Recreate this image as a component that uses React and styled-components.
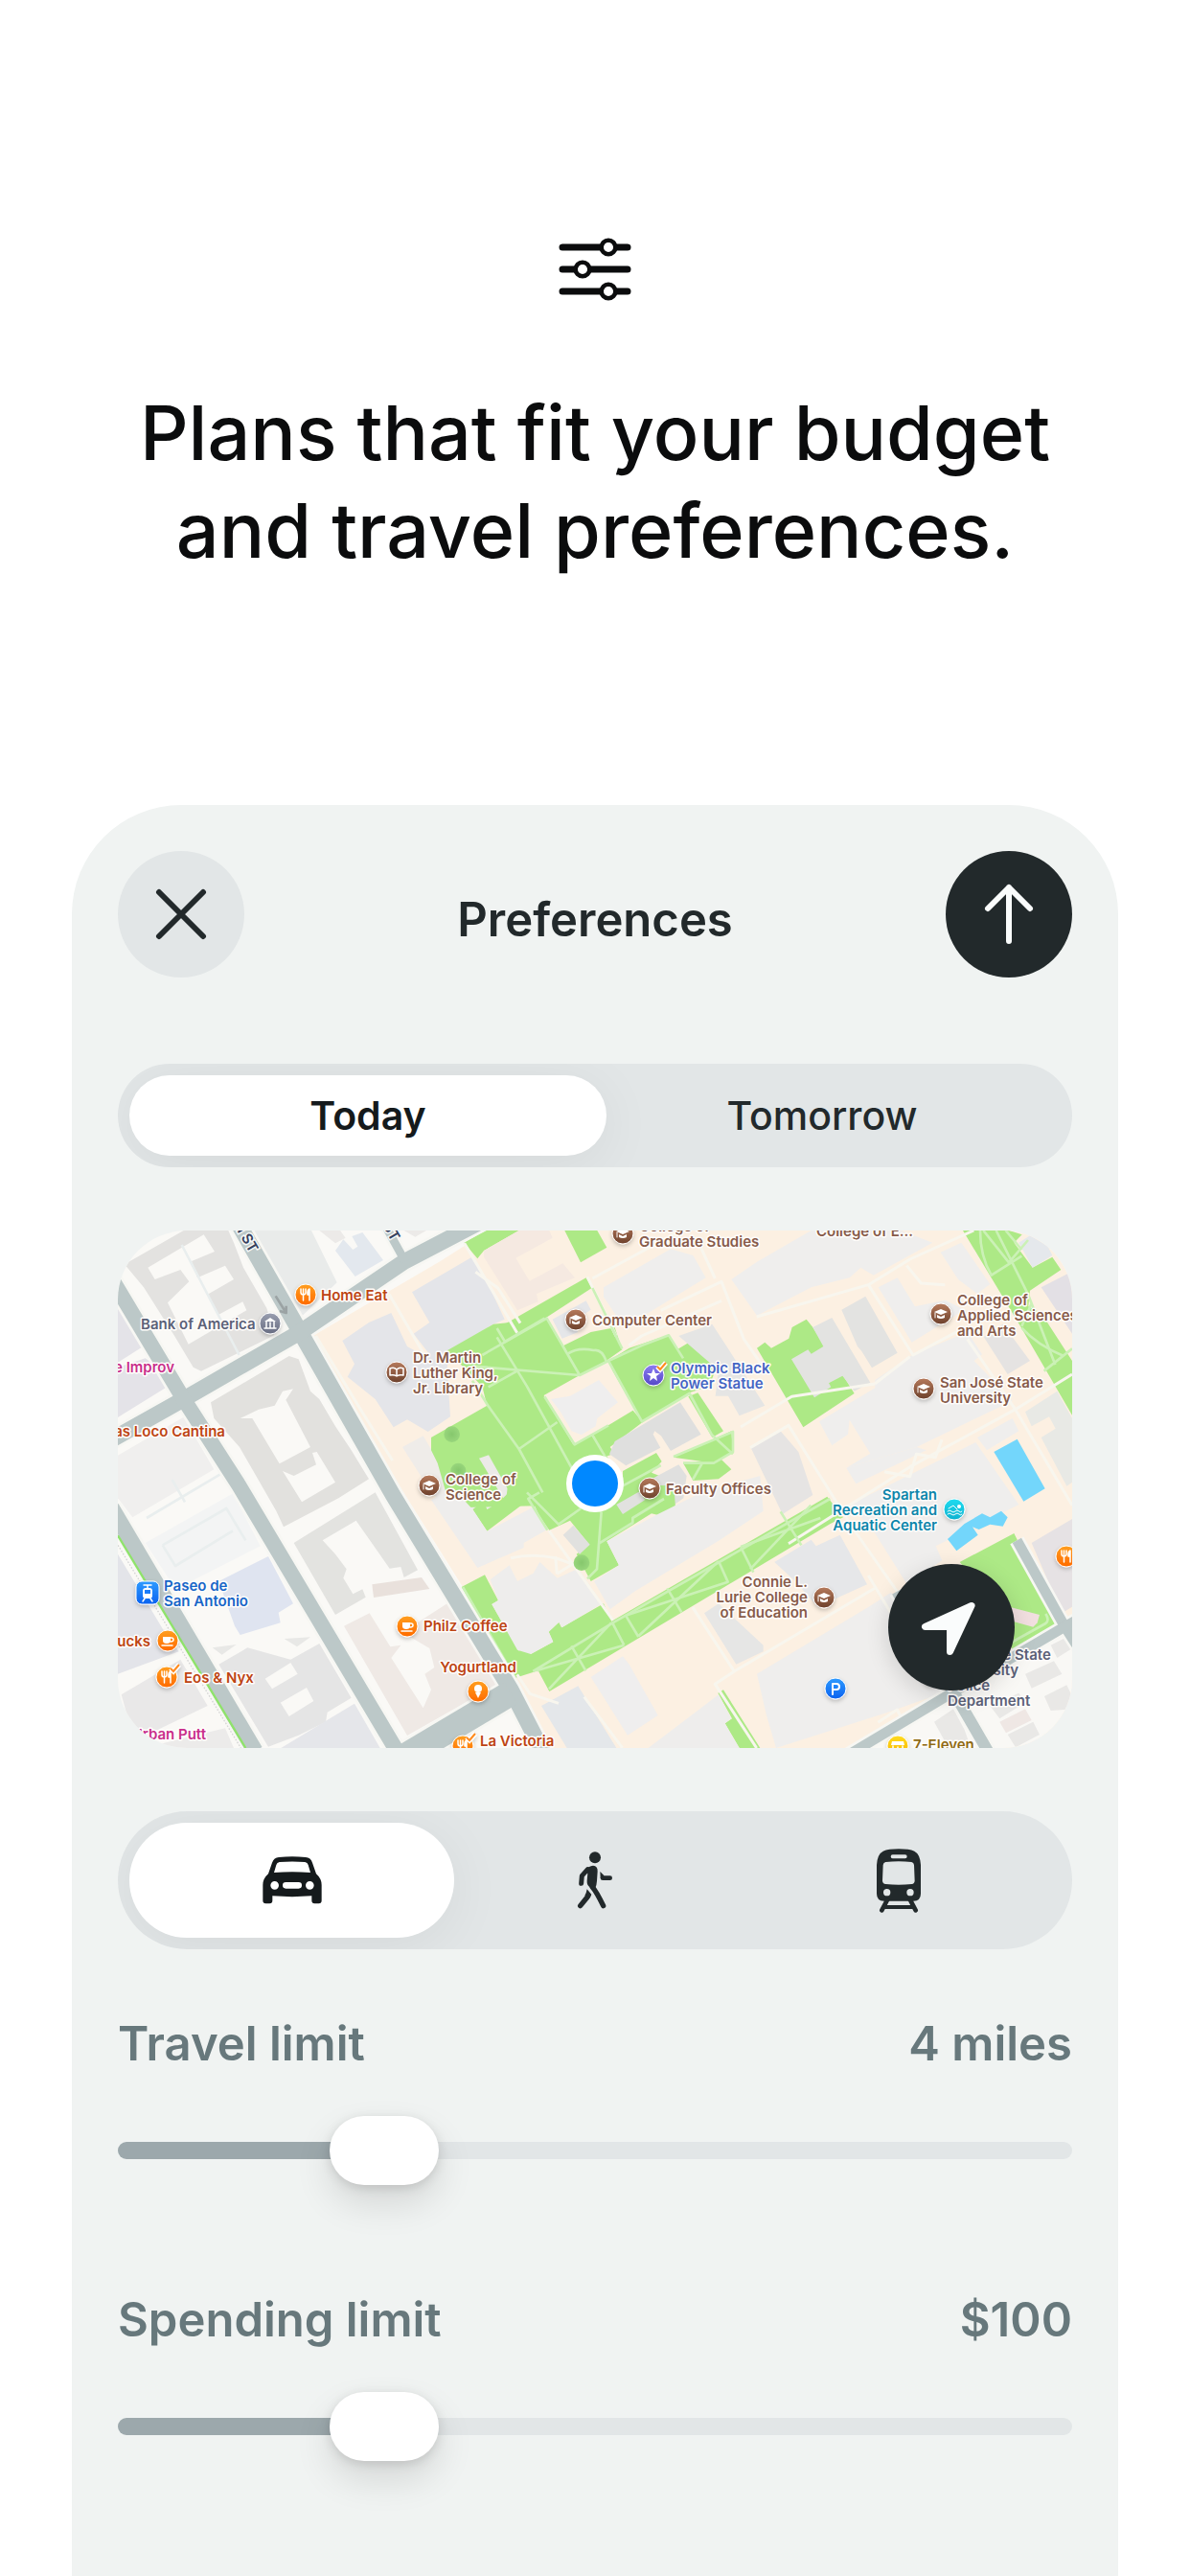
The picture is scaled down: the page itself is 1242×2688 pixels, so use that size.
import React, { useState } from "react"
import styled, { createGlobalStyle } from "styled-components"

const colors = {
  ink: "#0b0c0d",
  dark: "#22292b",
  panel: "#f0f3f2",
  control: "#e2e6e7",
  muted: "#67787c",
  fill: "#9ca8ac",
}

const labelColors = {
  food: "#bd4413",
  campus: "#875b4a",
  office: "#5b6178",
  fun: "#c92f8b",
  transit: "#1766c8",
  sight: "#4466c4",
  sport: "#0e86ab",
  store: "#8f6a14",
}

const pinColors = {
  food: ["#ff9f1f", "#ff6a00"],
  campus: ["#b67a5c", "#6d412c"],
  office: ["#9a9fb0", "#686d82"],
  transit: ["#2f9bff", "#0a62f0"],
  sight: ["#8b7df2", "#5547c8"],
  sport: ["#1fdcf0", "#0fb2d0"],
  store: ["#ffdb1f", "#f7b500"],
}

const LINE = 16

const labels = [
  { kind: "food", x: 212, y: 73, lines: ["Home Eat"] },
  { kind: "office", x: 24, y: 103, lines: ["Bank of America"] },
  { kind: "fun", x: 59, y: 148, anchor: "end", lines: ["e Improv"] },
  { kind: "food", x: 112, y: 215, anchor: "end", lines: ["as Loco Cantina"] },
  { kind: "campus", x: 308, y: 138, lines: ["Dr. Martin", "Luther King,", "Jr. Library"] },
  { kind: "campus", x: 342, y: 265, lines: ["College of", "Science"] },
  { kind: "campus", x: 495, y: 99, lines: ["Computer Center"] },
  { kind: "campus", x: 544, y: 1, lines: ["College of", "Graduate Studies"] },
  { kind: "campus", x: 729, y: 6, lines: ["College of E..."] },
  { kind: "sight", x: 577, y: 149, lines: ["Olympic Black", "Power Statue"] },
  { kind: "campus", x: 876, y: 78, lines: ["College of", "Applied Sciences", "and Arts"] },
  { kind: "campus", x: 858, y: 164, lines: ["San José State", "University"] },
  { kind: "campus", x: 572, y: 275, lines: ["Faculty Offices"] },
  { kind: "sport", x: 855, y: 281, anchor: "end", lines: ["Spartan", "Recreation and", "Aquatic Center"] },
  { kind: "campus", x: 720, y: 372, anchor: "end", lines: ["Connie L.", "Lurie College", "of Education"] },
  { kind: "transit", x: 48, y: 376, lines: ["Paseo de", "San Antonio"] },
  { kind: "food", x: 34, y: 434, anchor: "end", lines: ["ucks"] },
  { kind: "food", x: 69, y: 472, lines: ["Eos & Nyx"] },
  { kind: "food", x: 319, y: 418, lines: ["Philz Coffee"] },
  { kind: "fun", x: 92, y: 531, anchor: "end", lines: ["Urban Putt"] },
  { kind: "food", x: 376, y: 461, anchor: "middle", lines: ["Yogurtland"] },
  { kind: "food", x: 378, y: 538, lines: ["La Victoria"] },
  { kind: "store", x: 830, y: 542, lines: ["7-Eleven"] },
  { kind: "office", x: 866, y: 448, lines: ["San José State", "University", "Police", "Department"] },
]

const pins = [
  { kind: "food", glyph: "fork", x: 196, y: 67 },
  { kind: "office", glyph: "bank", x: 159, y: 97 },
  { kind: "campus", glyph: "book", x: 291, y: 148 },
  { kind: "campus", glyph: "cap", x: 325, y: 266 },
  { kind: "campus", glyph: "cap", x: 478, y: 93 },
  { kind: "campus", glyph: "cap", x: 527, y: 3 },
  { kind: "sight", glyph: "star", x: 559, y: 151, checked: true },
  { kind: "campus", glyph: "cap", x: 859, y: 87 },
  { kind: "campus", glyph: "cap", x: 841, y: 165 },
  { kind: "campus", glyph: "cap", x: 555, y: 269 },
  { kind: "sport", glyph: "swim", x: 873, y: 291 },
  { kind: "campus", glyph: "cap", x: 737, y: 383 },
  { kind: "transit", glyph: "parking", x: 749, y: 478 },
  { kind: "transit", glyph: "tram", x: 31, y: 378, square: true },
  { kind: "food", glyph: "cup", x: 52, y: 428 },
  { kind: "food", glyph: "fork", x: 51, y: 466, checked: true },
  { kind: "food", glyph: "cup", x: 302, y: 413 },
  { kind: "food", glyph: "cone", x: 376, y: 481 },
  { kind: "food", glyph: "fork", x: 360, y: 538, checked: true },
  { kind: "store", glyph: "shop", x: 814, y: 538 },
  { kind: "food", glyph: "fork", x: 990, y: 340 },
  { kind: "office", glyph: "bank", x: 850, y: 464 },
]

// Ground shapes are drawn at three units per pixel, one sheet for each sixth of the map
const sheets = [
  {
    at: "-9 -12",
    shapes: [
      ["#e3e2e0", "30,118 215,12 355,12 372,50 402,128 475,255 500,340 270,452 245,440 185,340 90,190"],
      ["#faf9f6", "103,128 278,25 312,78 240,108 258,160 345,122 372,165 290,212 325,275 400,235 412,262 230,368 165,238 232,172 205,135 125,165"],
      ["#e9ebea", "415,12 615,12 695,175 575,290 560,262"],
      ["#e3e8ee", "690,75 715,40 745,72 760,62 742,30 775,18 840,105 752,156"],
      ["#eceae8", "640,12 705,12 722,35 690,52"],
      ["#eceae8", "905,12 975,12 940,32"],
      ["#e4e3e8", "9,238 88,375 9,425"],
      ["#e4e3e8", "9,440 95,412 150,450 158,505 9,597"],
      ["#f0efee", "9,716 215,596 310,760 55,910 9,850"],
      ["#e2e1de", "300,550 545,405 575,415 612,515 640,540 690,625 740,700 795,790 700,850 528,940 505,890 390,690 310,600"],
      ["#faf9f6", "392,600 450,572 500,560 525,515 558,508 535,542 612,690 515,742 430,600"],
      ["#faf9f6", "525,765 560,780 630,745 618,708 632,705 690,800 585,862"],
    ],
  },
  {
    at: "-9 798",
    shapes: [
      ["#f3f4f4", "95,180 370,25 455,190 190,325"],
      ["#dfe4f0", "325,300 480,222 558,370 512,398 518,430 392,468 375,440"],
      ["#e3e3e0", "560,180 815,22 948,265 905,288 895,255 860,260 825,210 755,110 650,172 690,215 725,262 715,290 745,340 775,325 785,350 690,405"],
      ["#e9e1dc", "805,310 960,288 985,324 810,351"],
      ["#efe9e5", "717,440 797,400 862,505 895,500 865,540 965,697 990,640 970,590 1000,570 985,510 900,460 1040,370 1240,610 1195,625 915,783"],
      ["#e5e5e5", "325,560 415,508 550,545 640,495 740,665 665,710 660,740 575,782 480,818"],
      ["#faf9f6", "470,605 550,555 572,590 492,637"],
      ["#faf9f6", "518,680 600,633 622,675 545,723"],
      ["#e8e8e6", "305,508 380,498 335,530"],
      ["#e8e8e6", "530,480 612,475 570,505"],
      ["#e5e6ea", "520,822 750,683 830,822"],
      ["#e3e4e9", "9,215 150,450 200,520 9,590"],
      ["#e9e8e8", "20,655 205,545 290,690 60,800"],
      ["#ecebea", "90,822 345,760 372,822"],
    ],
  },
]

const campusSheets = [
  {
    at: "-9 -12",
    shapes: [
      ["#e4e5e9", "930,205 1115,97 1155,150 1220,290 1185,305 1050,385 1040,440 1050,595 980,642 915,604 872,628 815,540 728,470 750,430 712,357 795,300 865,270 915,375 960,400 985,400 935,335 985,300"],
      ["#efece9", "900,690 965,655 1050,800 1180,800 1225,860 1090,960 970,800"],
    ],
  },
  {
    at: "981 -12",
    shapes: [
      ["#ade986", "103,50 170,12 275,12 165,75 145,100"],
      ["#ade986", "418,12 520,12 550,65 468,112"],
      ["#ade986", "50,388 195,305 362,288 465,465 353,528 445,682 500,652 570,745 450,840 480,870 60,880 20,740 0,700 0,660 175,560 160,500"],
      ["#ade986", "208,318 485,160 503,192 355,288 230,360"],
      ["#ade986", "415,372 500,330 575,316 598,385 548,420 465,465"],
      ["#ade986", "555,420 620,380 745,338 770,385 820,355 850,370 890,450 870,500 808,520 660,608 570,455"],
      ["#ade986", "505,652 632,575 662,612 560,690 575,710 545,720"],
      ["#ade986", "805,532 835,520 915,640 880,660"],
      ["#ade986", "758,722 940,640 945,705 885,740"],
      ["#ade986", "790,742 905,725 940,760 900,790 820,795"],
      ["#ade986", "600,765 705,708 722,735 690,770 740,790 600,880"],
      ["#f5e9e1", "165,75 275,12 370,12 380,35 265,98 308,170 412,115 450,160 330,210 335,235 270,262 165,95"],
      ["#e5e6e9", "380,290 485,232 500,260 440,300 460,330 410,350"],
      ["#efeeed", "540,190 750,70 820,90 860,160 680,270 600,310 540,220"],
      ["#fcf0e2", "353,530 540,430 570,455 630,570 445,682"],
      ["#efeeee", "375,540 435,530 525,480 585,550 520,600 515,625 470,652 440,640 405,580"],
      ["#dfdfde", "558,712 575,672 780,550 845,650 750,702 720,655 700,640 695,650 718,692 610,748"],
      ["#e5e5e4", "775,342 880,305 1045,560 965,592 930,530 890,530 900,450"],
      ["#e0e0df", "690,790 775,745 800,780 790,850 720,900"],
      ["#eceae8", "150,725 180,715 245,830 225,850"],
    ],
  },
  {
    at: "1971 -12",
    shapes: [
      ["#ade986", "30,380 55,362 75,380 130,350 140,315 185,290 205,315 335,522 175,628"],
      ["#ade986", "675,12 820,12 860,25 835,50 893,128 955,95 982,135 885,200 880,250 920,270 1017,420 1017,590 860,320"],
      ["#e3e3e1", "138,415 190,385 200,398 238,375 205,315 265,285 385,488 335,515 298,467 255,490 262,502 210,535"],
      ["#efeeed", "-50,165 30,110 200,12 480,12 580,50 395,152 355,128 320,160 200,190 30,278"],
      ["#e3e3e1", "295,260 370,218 470,395 390,442 358,390 345,375"],
      ["#efeeed", "410,190 470,160 525,250 620,230 680,260 515,362"],
      ["#efeeed", "605,80 670,50 760,180 720,210 660,165"],
      ["#e5e8ec", "850,50 885,28 940,60 955,90 893,128"],
      ["#e3e0e5", "920,190 1017,140 1017,335"],
      ["#e5e3e2", "740,345 800,305 885,420 815,462"],
      ["#efeeed", "225,610 400,505 400,480 520,400 690,330 735,400 710,420 830,545 530,690 310,755 385,710 320,605 315,650 265,685"],
      ["#efeeed", "310,755 340,805 560,700 530,690"],
      ["#e6e4e3", "10,690 100,635 160,705 205,840 110,900"],
      ["#efeeed", "720,660 830,600 850,640 750,700"],
      ["#e8e9e5", "870,580 970,515 1017,600 1017,800 1000,812 920,660 965,632 945,595 890,625"],
      ["#efeeed", "320,870 715,675 850,870 590,1000 610,1045 500,1120 400,960"],
      ["#73d6fb", "772,705 845,665 932,820 865,860"],
    ],
  },
  {
    at: "981 798",
    shapes: [
      ["#ade986", "130,75 165,50 175,75 235,40 240,0 760,0 765,70 720,95 690,88 550,175 588,250 500,300 455,215 495,185 435,110 370,140 305,45 175,143"],
      ["#ade986", "95,318 168,280 210,360 190,372 275,518 295,500 312,528 382,490 368,458 400,428 408,445 540,370 565,425 1240,35 1290,100 1250,120 990,275 370,645 335,580 262,603"],
      ["#ade986", "898,650 915,640 1030,822 965,822 920,745 942,730"],
      ["#eeedec", "0,45 70,10 130,75 175,143 325,65 360,140 290,180 290,195 145,258"],
      ["#eeedec", "185,295 245,250 270,300 320,275 340,240 395,290 460,260 535,370 410,445 400,428 368,458 382,490 312,528 270,515 190,372 210,360"],
      ["#eeedec", "550,175 710,90 850,20 1030,-30 1040,80 905,170 640,330 560,388 510,300 588,250"],
      ["#e1e1df", "413,155 445,125 497,185 465,215"],
      ["#e1e1df", "580,60 650,20 670,45 600,90"],
      ["#e4e7ea", "345,690 460,628 580,822 425,822"],
      ["#efeeee", "500,600 600,535 620,560 710,720 615,782"],
      ["#e6e6e5", "855,400 900,370 1040,500 1040,520 955,560"],
      ["#eeedec", "680,822 900,655 940,730 920,745 965,822"],
    ],
  },
  {
    at: "1971 798",
    shapes: [
      ["#73d6fb", "627,168 680,120 735,88 760,100 795,80 815,100 800,128 760,122 725,138 705,130 722,155 655,205"],
      ["#ade986", "665,240 835,150 978,435 830,515 750,340"],
      ["#e6e7e9", "85,240 200,170 215,190 290,155 375,310 220,380 150,300"],
      ["#efeeed", "30,590 380,380 450,335 640,640 440,710 90,822 60,720"],
      ["#f2dfe0", "780,370 915,405 908,430 895,443 830,425"],
      ["#e6e2e4", "890,180 1017,105 1017,380 985,400"],
      ["#f9f8f5", "1017,475 995,455 640,665 350,822 1017,822"],
      ["#e9e8e6", "585,740 645,700 680,765 700,822 630,822"],
      ["#e9e8e6", "760,690 850,650 870,680 790,730"],
      ["#efe7e4", "790,740 870,700 890,735 810,775"],
      ["#e9e8e6", "815,780 895,740 915,780 840,820"],
      ["#e9e8e6", "870,590 960,550 985,590 890,635"],
      ["#e9e8e6", "930,660 1000,625 1017,660 1017,700 950,705"],
      ["#e9e8e6", "950,500 1000,475 1017,510 970,540"],
    ],
  },
]

const footpaths = [
  "M1187,334 L1281,488 L1430,760 L1490,860",
  "M1187,306 L1212,348 L1336,275",
  "M1141,390 L1343,275 L1446,453 L1115,425 M1160,490 L1250,440",
  "M1446,453 L1536,408 L1640,360 L1725,328 L1770,400",
  "M1110,470 L1160,550 L1256,684 L1330,820",
  "M1256,684 L1376,600 M1336,520 L1430,670 L1536,610",
  "M1410,385 Q1440,365 1490,375 Q1515,370 1529,408",
  "M1486,180 L1579,370",
  "M1536,408 L1641,598 L1790,510 L1860,640 L1926,700",
  "M1740,708 L1926,630 L1926,693 L1866,728 L1770,728 M1830,728 L1800,780",
  "M1486,640 L1530,715 M1580,800 L1700,735",
  "M1281,820 L1380,920 L1450,870 M1345,938 L1285,840 L1320,820",
  "M1514,880 L1500,1060 L1470,1090 M1506,980 L1612,915 L1612,900 L1710,840",
  "M1300,1380 L1555,1225 L2230,840 M1310,1378 L1585,1298 M1350,1435 L1545,1228 M1420,1300 L1465,1378",
  "M1547,1225 L1585,1298 M1720,1120 L1765,1195 M1590,1205 L1630,1272 M1590,1205 L1910,1100 L1881,1035",
  "M1881,1035 L1630,1270 M1950,990 L1990,1070 M1950,990 L2200,900 M1980,1060 L2170,860 M2075,880 L2140,985",
  "M1080,1116 L1243,1400",
  "M2700,0 Q2700,80 2735,140 L2830,80 M2750,0 L2850,200 L2935,420 M2710,0 L2790,100 L2850,30",
  "M2830,305 Q2880,360 2960,392 M2900,440 L2988,370 M2780,0 L2830,60 M2860,230 L2830,300",
  "M2770,1305 L2905,1230 Q2918,1220 2905,1200",
]

const walkways = [
  "M1085,40 L1250,320 M1120,130 L1190,180 L1260,290",
  "M1486,150 L1780,-10 M1470,145 L1560,330",
  "M1700,250 L1890,160 L1960,340 L2030,440 M1870,150 L1810,20",
  "M1600,360 L1640,330 L1890,220",
  "M2000,270 L2350,170 L2480,90 L2680,0",
  "M2350,170 L2490,390 L2640,310 M2470,110 L2515,165 L2590,170",
  "M2370,480 L2480,395 M1950,615 L2110,520 L2370,480",
  "M1980,680 L2100,610 L2300,930 L2440,1130",
  "M2100,980 L2480,740 L2810,560 L2988,450",
  "M2400,755 L2480,770 L2500,700 L2560,710 L2580,655",
  "M2660,340 L2810,560 L2988,860",
  "M1550,1220 L1350,940 M1230,1025 Q1300,1010 1370,1025 L1440,1050 M1375,1075 L1370,1020 M1375,1075 L1430,1040",
  "M1800,1180 L1930,1380 L2370,1120 M1930,1380 L1870,1420 L2000,1620",
  "M1380,1480 L1290,1450 L1250,1390 M1460,1460 L1580,1620",
  "M2350,1080 L2440,1230 M2380,1540 L2440,1500 L2460,1540",
  "M620,330 L760,560 L860,720 M850,200 L960,390",
]

const streets = [
  [50, "M378,-20 L571,318 L861,828 L1231,1438 L1335,1640"],
  [50, "M-20,655 L206,528 L571,318 L896,98 L1160,-40"],
  [48, "M-20,150 L206,528 L379,798 L880,1640"],
  [80, "M1231,1448 L850,1675"],
  [50, "M-20,868 L430,1630"],
  [26, "M835,-20 L900,98"],
  [32, "M2815,970 L2965,1240 L3010,1310"],
  [32, "M3010,1215 L2965,1240 L2611,1448 L2290,1640"],
  [36, "M2440,1130 L2620,1450 L2730,1640"],
]

const glyphs = {
  fork: (
    <>
      <path d="M-5 -6v3.5a2.5 2.5 0 0 0 5 0V-6M-2.500 -6V6" />
      <path d="M4 6V-6q-2.500 1-2 6h2" fill="#fff" />
    </>
  ),
  bank: (
    <>
      <path d="M-6 -2L0 -6L6 -2Z" fill="#fff" stroke="none" />
      <path d="M-4 -2V4M4 -2V4M-6 5H6M0 -1V4" />
    </>
  ),
  book: <path d="M0 -3Q-3 -6-7 -4V3Q-3 2 0 4Q3 2 7 3V-4Q3 -6 0 -3V4" />,
  cap: (
    <>
      <path d="M-7 -2L0 -5L7 -2L0 1Z" fill="#fff" stroke="none" />
      <path d="M-4 1V4Q0 6 4 4V1L0 3Z" fill="#fff" stroke="none" />
      <path d="M-6 -1V4" strokeWidth="1" />
    </>
  ),
  star: <path d="M0 -7L2 -2L7 -2L3 1L4 6L0 3L-4 6L-3 1L-7 -2L-2 -2Z" fill="#fff" stroke="none" />,
  swim: (
    <>
      <circle cx="5" cy="-3" r="2" fill="#fff" stroke="none" />
      <path d="M-6 -1L-1 -4L3 0M-7 2q2-2 4 0t4 0t4 0t3 0M-7 5q2-2 4 0t4 0t4 0t3 0" strokeWidth="1" />
    </>
  ),
  parking: <path d="M-3 6V-5H1Q4 -5 4 -2T1 1H-3" strokeWidth="2" />,
  tram: (
    <>
      <rect x="-5" y="-5" width="10" height="11" rx="3" fill="#fff" stroke="none" />
      <rect x="-3" y="-3" width="6" height="4" fill="#1c7dfa" stroke="none" />
      <path d="M-4 -8H4M0 -8V-5M-3 6L-5 9M3 6L5 9" />
    </>
  ),
  cup: (
    <>
      <path d="M-5 -4H3V0Q3 3-1 3Q-5 3-5 0Z" fill="#fff" stroke="none" />
      <path d="M3 -3H4Q6 -3 6-1T3 1M-6 5H5" />
    </>
  ),
  cone: (
    <>
      <circle cx="0" cy="-3" r="4" fill="#fff" stroke="none" />
      <path d="M-3 1H3L0 7Z" fill="#fff" stroke="none" />
    </>
  ),
  shop: (
    <>
      <path d="M-6 -5H6L7 -1H-7Z" fill="#fff" stroke="none" />
      <path d="M-5 0V5H5V0M0 1V5" />
    </>
  ),
}

const Sheet = ({ at, shapes }) => (
  <g transform={`translate(${at})`}>
    {shapes.map(([fill, points]) => (
      <polygon key={points} fill={fill} points={points} />
    ))}
  </g>
)

const Pin = ({ kind, glyph, x, y, checked, square }) => (
  <g transform={`translate(${x} ${y})`} filter="url(#pin-shadow)">
    {square ? (
      <rect x="-12" y="-12" width="24" height="24" rx="6" fill={`url(#pin-${kind})`} stroke="#fff" />
    ) : (
      <circle r="11" fill={`url(#pin-${kind})`} stroke="#fff" />
    )}
    <g fill="none" stroke="#fff" strokeWidth="1.5" strokeLinecap="round" strokeLinejoin="round">
      {glyphs[glyph]}
    </g>
    {checked && (
      <>
        <path d="M4 -9L7 -6L13 -13" fill="none" stroke="#fff" strokeWidth="5" />
        <path d="M4 -9L7 -6L13 -13" fill="none" stroke="#ff8a1f" strokeWidth="2" />
      </>
    )}
  </g>
)

const CityMap = () => (
  <MapArt viewBox="0 0 996 540" preserveAspectRatio="xMidYMid slice" role="img" aria-label="Map">
    <defs>
      {Object.entries(pinColors).map(([kind, [top, bottom]]) => (
        <linearGradient key={kind} id={`pin-${kind}`} x1="0" y1="0" x2="0" y2="1">
          <stop offset="0" stopColor={top} />
          <stop offset="1" stopColor={bottom} />
        </linearGradient>
      ))}
      <radialGradient id="tree">
        <stop offset="0" stopColor="#86c76d" />
        <stop offset="1" stopColor="#98d67c" />
      </radialGradient>
      <filter id="pin-shadow" x="-50%" y="-50%" width="200%" height="200%">
        <feDropShadow dx="0" dy="2" stdDeviation="2" floodOpacity="0.22" />
      </filter>
    </defs>

    <g transform="scale(0.33333)">
      <rect width="2988" height="1620" fill="#faf9f6" />
      {sheets.map((sheet) => (
        <Sheet key={sheet.at} {...sheet} />
      ))}
      <polygon fill="#fcf0e2" points="594,340 1011,95 1180,-12 2988,-12 2988,1620 1340,1620 1080,1116" />
      {campusSheets.map((sheet) => (
        <Sheet key={sheet.at} {...sheet} />
      ))}
      <g fill="none" strokeLinejoin="round">
        {walkways.map((d) => (
          <path key={d} d={d} stroke="#f8f6ee" strokeWidth="9" />
        ))}
        {footpaths.map((d) => (
          <path key={d} d={d} stroke="#cbf1b6" strokeWidth="8" />
        ))}
        <path d="M200,45 L380,390 M90,900 L360,740 M170,780 L210,850 M140,985 L340,870 L400,970 M140,985 L180,1050 L360,940" stroke="#e9eeee" strokeWidth="8" />
        {streets.map(([width, d]) => (
          <path key={d} d={d} stroke="#f7f7f3" strokeWidth={width + 16} />
        ))}
        {streets.map(([width, d]) => (
          <path key={d} d={d} stroke="#bcc8c8" strokeWidth={width} />
        ))}
        <path d="M0,955 L400,1620" stroke="#8fe36a" strokeWidth="7" />
        <path d="M-10,968 L385,1620" stroke="#d5d5d5" strokeWidth="4" strokeDasharray="5 5" />
        <path d="M494,205 L525,255 M507,252 L527,258 L527,236" stroke="#9ba3a4" strokeWidth="8" />
      </g>
      <circle cx="1046" cy="638" r="25" fill="url(#tree)" />
      <circle cx="1066" cy="752" r="24" fill="url(#tree)" />
      <circle cx="1452" cy="1040" r="25" fill="url(#tree)" />
    </g>

    <StreetName transform="translate(138 24) rotate(60)">4TH ST</StreetName>
    <StreetName transform="translate(286 12) rotate(60)">5TH ST</StreetName>

    {pins.map((pin) => (
      <Pin key={`${pin.x}-${pin.y}`} {...pin} />
    ))}
    {labels.map(({ kind, x, y, anchor, lines }) => (
      <PlaceName key={`${x}-${y}`} $kind={kind} textAnchor={anchor}>
        {lines.map((line, i) => (
          <tspan key={line} x={x} y={y + i * LINE}>
            {line}
          </tspan>
        ))}
      </PlaceName>
    ))}
    <circle cx="498" cy="264" r="30" fill="#fff" />
    <circle cx="498" cy="264" r="24" fill="#0088ff" />
  </MapArt>
)

const SlidersIcon = () => (
  <svg width="78" height="66" viewBox="0 0 78 66" fill="none" stroke={colors.ink} aria-hidden="true">
    <path d="M5 10H73M5 33H73M5 56H73" strokeWidth="7" strokeLinecap="round" />
    <g fill="#fff" strokeWidth="4.500">
      <circle cx="53" cy="10" r="7.300" />
      <circle cx="26" cy="33" r="7.300" />
      <circle cx="53" cy="56" r="7.300" />
    </g>
  </svg>
)

const CloseIcon = () => (
  <svg width="54" height="54" viewBox="0 0 54 54" stroke="currentColor" strokeWidth="6" strokeLinecap="round">
    <path d="M4 4L50 50M50 4L4 50" />
  </svg>
)

const ArrowUpIcon = () => (
  <svg width="54" height="66" viewBox="0 0 54 66" fill="none" stroke="currentColor" strokeWidth="6" strokeLinecap="round" strokeLinejoin="round">
    <path d="M27 61V5M5 27L27 5L49 27" />
  </svg>
)

const LocationIcon = () => (
  <svg width="132" height="132" viewBox="0 0 132 132" fill="currentColor" stroke="currentColor" strokeWidth="7" strokeLinejoin="round">
    <path d="M87 43.500L38.500 65.500H64.500V91.500Z" />
  </svg>
)

const CarIcon = () => (
  <svg width="62" height="50" viewBox="39 110 186 150" fill="currentColor" fillRule="evenodd">
    <path d="M40 200Q40 180 57 165L69 130Q75 114 90 113Q132 109 174 113Q190 114 195 130L207 165Q224 180 224 200V249Q224 258 215 258H202Q193 258 193 249V234Q132 239 70 234V249Q70 258 61 258H49Q40 258 40 249ZM75 161Q132 157 189 161L182 137Q180 129 172 128Q132 125 92 128Q84 129 82 137ZM64 201a13 13 0 1 0 26 0a13 13 0 1 0 -26 0ZM174 201a13 13 0 1 0 26 0a13 13 0 1 0 -26 0ZM112 191a10 10 0 0 0 0 20H152a10 10 0 0 0 0 -20Z" />
  </svg>
)

const WalkIcon = () => (
  <svg width="38" height="60" viewBox="126 94 114 180" fill="currentColor" stroke="currentColor" strokeLinecap="round" strokeLinejoin="round">
    <circle cx="183" cy="113" r="18" stroke="none" />
    <path d="M148 156Q164 138 177 138Q192 139 191 156L189 186Q188 200 184 208L168 206Q157 200 158 186L160 162Z" stroke="none" />
    <path d="M140 194L142 170L160 150" fill="none" strokeWidth="15" />
    <path d="M174 204Q188 220 209 264" fill="none" strokeWidth="16" />
    <path d="M158 212L172 228Q170 236 165 242L151 232Q156 224 158 212Z" stroke="none" />
    <path d="M158 238L137 264" fill="none" strokeWidth="16" />
    <path d="M207 177H230" fill="none" strokeWidth="14" />
    <path d="M199 157L212 170L200 178Z" stroke="none" />
  </svg>
)

const TrainIcon = () => (
  <svg width="46" height="67" viewBox="0 -1 138 201" fill="currentColor" fillRule="evenodd">
    <path d="M0 50Q2 16 20 7Q36 0 69 0Q102 0 118 7Q136 16 138 50V140Q138 163 115 163H23Q0 163 0 140ZM28 41Q21 42 20 50L18 100Q19 109 28 110Q69 115 110 110Q118 109 119 100L117 50Q116 42 109 41Q69 37 28 41ZM50 18a6 6 0 0 0 0 12H89a6 6 0 0 0 0 -12ZM21 136a11 11 0 1 0 22 0a11 11 0 1 0 -22 0ZM94 136a11 11 0 1 0 22 0a11 11 0 1 0 -22 0Z" />
    <path d="M33 160L16 192M105 160L122 192" stroke="currentColor" strokeWidth="14" strokeLinecap="round" />
    <path d="M24 182H114" stroke="currentColor" strokeWidth="12" />
  </svg>
)

const modes = [
  { id: "car", name: "Drive", Icon: CarIcon },
  { id: "walk", name: "Walk", Icon: WalkIcon },
  { id: "train", name: "Train", Icon: TrainIcon },
]

const Limit = ({ id, title, format }) => {
  const [value, setValue] = useState(25)

  return (
    <LimitWrap>
      <LimitRow>
        <label htmlFor={id}>{title}</label>
        <output htmlFor={id}>{format(value)}</output>
      </LimitRow>
      <Slider
        id={id}
        type="range"
        min="0"
        max="100"
        value={value}
        $value={value}
        onChange={(e) => setValue(Number(e.target.value))}
      />
    </LimitWrap>
  )
}

const App = () => {
  const [day, setDay] = useState("Today")
  const [mode, setMode] = useState("car")

  return (
    <>
      <GlobalStyle />
      <Page>
        <Intro>
          <SlidersIcon />
          <Title>
            Plans that fit your budget
            <br />
            and travel preferences.
          </Title>
        </Intro>
        <Panel>
          <PanelHeader>
            <RoundButton aria-label="Close">
              <CloseIcon />
            </RoundButton>
            <PanelTitle>Preferences</PanelTitle>
            <RoundButton $dark aria-label="Apply">
              <ArrowUpIcon />
            </RoundButton>
          </PanelHeader>

          <DayTabs>
            {["Today", "Tomorrow"].map((name) => (
              <Tab key={name} $active={day === name} aria-pressed={day === name} onClick={() => setDay(name)}>
                {name}
              </Tab>
            ))}
          </DayTabs>

          <MapCard>
            <CityMap />
            <LocateButton $dark aria-label="My location">
              <LocationIcon />
            </LocateButton>
          </MapCard>

          <ModeTabs>
            {modes.map(({ id, name, Icon }) => (
              <Tab key={id} $active={mode === id} aria-label={name} aria-pressed={mode === id} onClick={() => setMode(id)}>
                <Icon />
              </Tab>
            ))}
          </ModeTabs>

          <Limits>
            <Limit id="travel" title="Travel limit" format={(v) => `${Math.round(v * 0.16)} miles`} />
            <Limit id="spending" title="Spending limit" format={(v) => `$${v * 4}`} />
          </Limits>
        </Panel>
      </Page>
    </>
  )
}

export default App

const GlobalStyle = createGlobalStyle`
  * {
    box-sizing: border-box;
  }

  body {
    margin: 0;
    background: #fff;
    font-family: Inter, "Liberation Sans", sans-serif;
  }

  button {
    padding: 0;
    border: 0;
    font-family: inherit;
    cursor: pointer;
  }
`
const Page = styled.main`
  display: flex;
  flex-direction: column;
  min-height: 100vh;
  padding: 0 75px;
`
const Intro = styled.header`
  display: flex;
  flex-direction: column;
  align-items: center;
  padding: 248px 0 236px;
`
const Title = styled.h1`
  margin: 86px 0 0;
  color: ${colors.ink};
  font-size: 79px;
  font-weight: 500;
  line-height: 102px;
  text-align: center;
  white-space: nowrap;
`
const Panel = styled.section`
  flex: 1;
  padding: 48px;
  border-radius: 114px 114px 0 0;
  background: ${colors.panel};
`
const PanelHeader = styled.div`
  display: flex;
  align-items: center;
  justify-content: space-between;
`
const RoundButton = styled.button`
  display: flex;
  align-items: center;
  justify-content: center;
  width: 132px;
  height: 132px;
  border-radius: 50%;
  background: ${({ $dark }) => ($dark ? colors.dark : colors.control)};
  color: ${({ $dark }) => ($dark ? "#fafcfc" : colors.dark)};
`
const PanelTitle = styled.h2`
  margin: 0;
  padding-top: 12px;
  color: ${colors.dark};
  font-size: 49px;
  font-weight: 600;
  line-height: 60px;
`
const Tabs = styled.div`
  display: grid;
  overflow: hidden;
  border-radius: 72px;
  background: ${colors.control};
`
const DayTabs = styled(Tabs)`
  grid-template-columns: 498fr 450fr;
  height: 108px;
  margin-top: 90px;
  padding: 12px 36px 12px 12px;
`
const ModeTabs = styled(Tabs)`
  grid-template-columns: 339fr 294fr 339fr;
  height: 144px;
  margin-top: 66px;
  padding: 12px;
`
const Tab = styled.button`
  display: flex;
  align-items: center;
  justify-content: center;
  border-radius: 60px;
  background: ${({ $active }) => ($active ? "#fff" : "transparent")};
  box-shadow: ${({ $active }) => ($active ? "0 9px 60px rgba(0, 20, 10, 0.06)" : "none")};
  color: ${({ $active }) => ($active ? "#151a1c" : colors.dark)};
  font-size: 41px;
  font-weight: ${({ $active }) => ($active ? 600 : 500)};
`
const MapCard = styled.div`
  position: relative;
  height: 540px;
  margin-top: 66px;
  overflow: hidden;
  border-radius: 72px;
`
const MapArt = styled.svg`
  display: block;
  width: 100%;
  height: 100%;
`
const PlaceName = styled.text`
  fill: ${({ $kind }) => labelColors[$kind]};
  stroke: #fffdfb;
  stroke-width: 3px;
  stroke-linejoin: round;
  paint-order: stroke;
  font-size: 15px;
  font-weight: 600;
`
const StreetName = styled.text`
  fill: #34405c;
  stroke: #f5f7f7;
  stroke-width: 3px;
  paint-order: stroke;
  text-anchor: end;
  font-size: 15px;
  font-weight: 600;
`
const LocateButton = styled(RoundButton)`
  position: absolute;
  right: 60px;
  bottom: 60px;
  box-shadow: 0 6px 24px rgba(0, 0, 0, 0.14);
`
const Limits = styled.div`
  display: flex;
  flex-direction: column;
  gap: 111px;
  margin-top: 69px;
`
const LimitWrap = styled.div`
  display: flex;
  flex-direction: column;
  gap: 45px;
`
const LimitRow = styled.div`
  display: flex;
  justify-content: space-between;
  color: ${colors.muted};
  font-size: 49px;
  font-weight: 600;
  line-height: 60px;
`
const Slider = styled.input`
  appearance: none;
  width: 100%;
  height: 72px;
  margin: 0;
  background: transparent;

  &::-webkit-slider-runnable-track {
    height: 18px;
    border-radius: 9px;
    background: linear-gradient(
      to right,
      ${colors.fill} ${({ $value }) => $value}%,
      ${colors.control} ${({ $value }) => $value}%
    );
  }

  &::-webkit-slider-thumb {
    appearance: none;
    width: 114px;
    height: 72px;
    margin-top: -27px;
    border-radius: 36px;
    background: #fff;
    box-shadow: 0 18px 39px rgba(0, 0, 0, 0.12), 0 3px 12px rgba(0, 0, 0, 0.12);
  }
`
